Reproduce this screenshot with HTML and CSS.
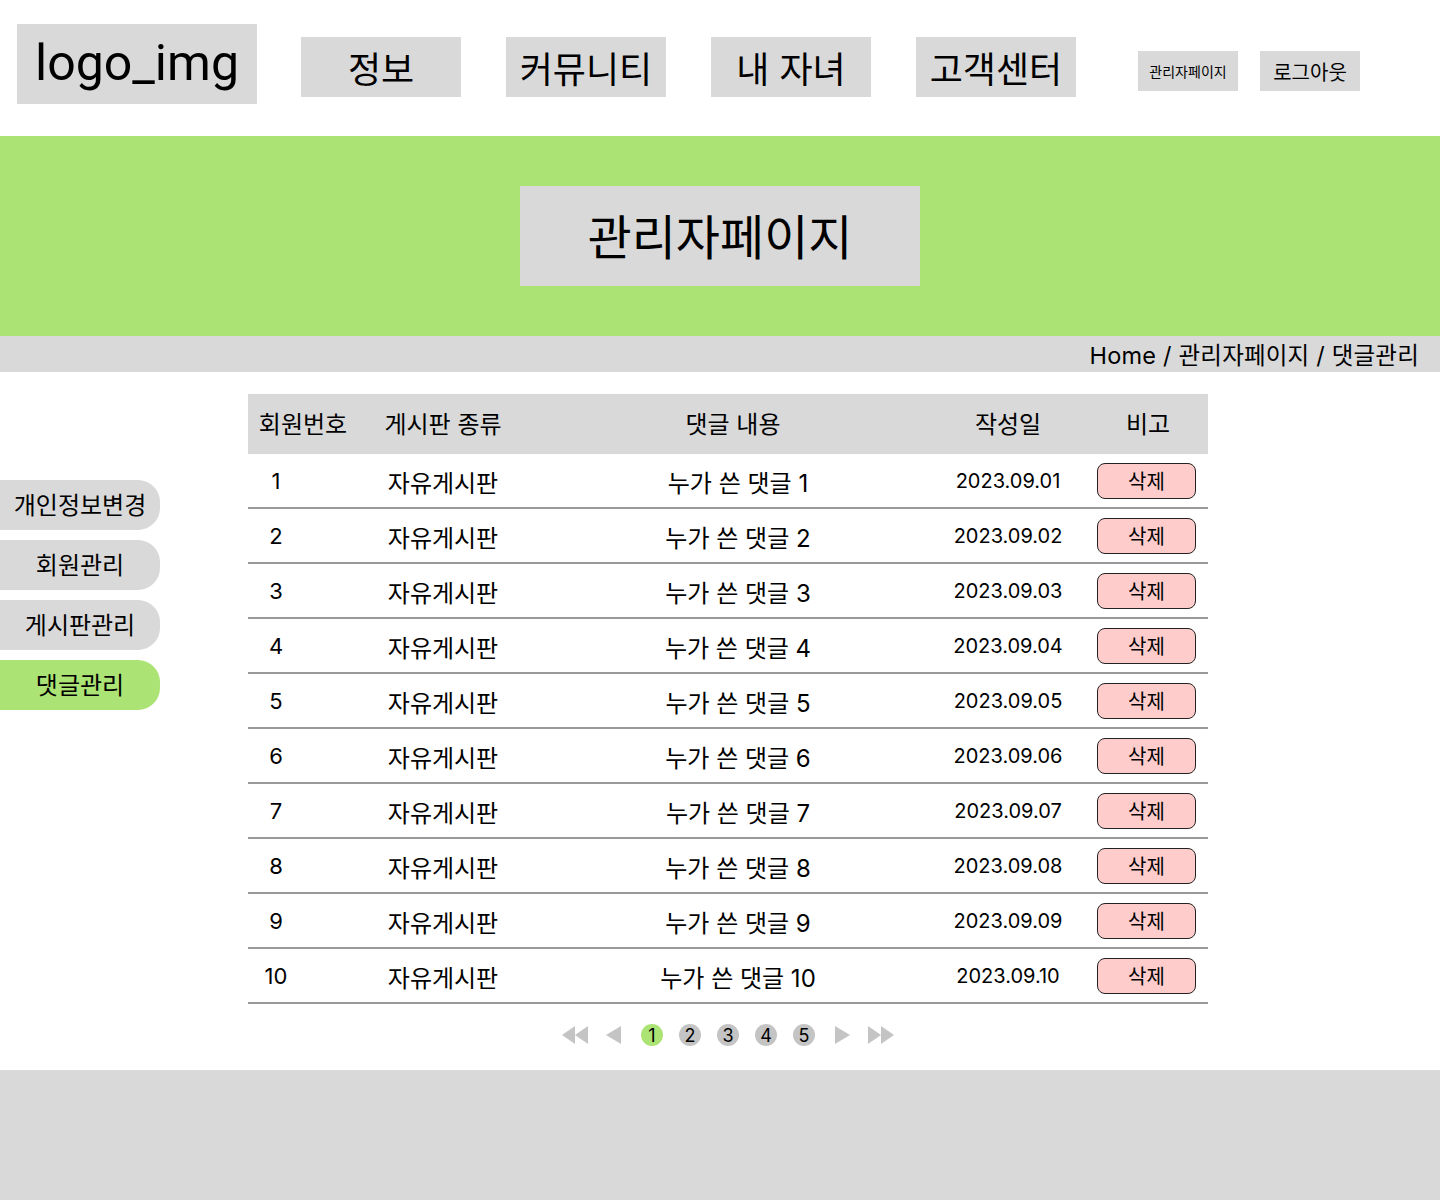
FILE: index.html
```html
<!DOCTYPE html>
<html lang="ko">
<head>
<meta charset="utf-8">
<title>관리자페이지 - 댓글관리</title>
<link rel="stylesheet" href="styles.css">
</head>
<body>
<header class="top">
  <div class="logo">logo_img</div>
  <nav class="gnb">
    <a class="gnb-item gnb-first">정보</a>
    <a class="gnb-item">커뮤니티</a>
    <a class="gnb-item">내 자녀</a>
    <a class="gnb-item">고객센터</a>
  </nav>
  <div class="util">
    <a class="util-admin">관리자페이지</a>
    <a class="util-logout">로그아웃</a>
  </div>
</header>

<section class="banner">
  <h1 class="banner-title">관리자페이지</h1>
</section>

<div class="crumb">Home / 관리자페이지 / 댓글관리</div>

<main class="content">
  <aside class="side">
    <a class="side-item">개인정보변경</a>
    <a class="side-item">회원관리</a>
    <a class="side-item">게시판관리</a>
    <a class="side-item side-active">댓글관리</a>
  </aside>

  <section class="board">
    <div class="thead">
      <div class="th">회원번호</div>
      <div class="th">게시판 종류</div>
      <div class="th">댓글 내용</div>
      <div class="th">작성일</div>
      <div class="th th-last">비고</div>
    </div>
    <div class="tbody">
      <div class="tr"><div class="td td-no">1</div><div class="td">자유게시판</div><div class="td td-text">누가 쓴 댓글 1</div><div class="td td-date">2023.09.01</div><div class="td td-act"><button class="del">삭제</button></div></div>
      <div class="tr"><div class="td td-no">2</div><div class="td">자유게시판</div><div class="td td-text">누가 쓴 댓글 2</div><div class="td td-date">2023.09.02</div><div class="td td-act"><button class="del">삭제</button></div></div>
      <div class="tr"><div class="td td-no">3</div><div class="td">자유게시판</div><div class="td td-text">누가 쓴 댓글 3</div><div class="td td-date">2023.09.03</div><div class="td td-act"><button class="del">삭제</button></div></div>
      <div class="tr"><div class="td td-no">4</div><div class="td">자유게시판</div><div class="td td-text">누가 쓴 댓글 4</div><div class="td td-date">2023.09.04</div><div class="td td-act"><button class="del">삭제</button></div></div>
      <div class="tr"><div class="td td-no">5</div><div class="td">자유게시판</div><div class="td td-text">누가 쓴 댓글 5</div><div class="td td-date">2023.09.05</div><div class="td td-act"><button class="del">삭제</button></div></div>
      <div class="tr"><div class="td td-no">6</div><div class="td">자유게시판</div><div class="td td-text">누가 쓴 댓글 6</div><div class="td td-date">2023.09.06</div><div class="td td-act"><button class="del">삭제</button></div></div>
      <div class="tr"><div class="td td-no">7</div><div class="td">자유게시판</div><div class="td td-text">누가 쓴 댓글 7</div><div class="td td-date">2023.09.07</div><div class="td td-act"><button class="del">삭제</button></div></div>
      <div class="tr"><div class="td td-no">8</div><div class="td">자유게시판</div><div class="td td-text">누가 쓴 댓글 8</div><div class="td td-date">2023.09.08</div><div class="td td-act"><button class="del">삭제</button></div></div>
      <div class="tr"><div class="td td-no">9</div><div class="td">자유게시판</div><div class="td td-text">누가 쓴 댓글 9</div><div class="td td-date">2023.09.09</div><div class="td td-act"><button class="del">삭제</button></div></div>
      <div class="tr"><div class="td td-no">10</div><div class="td">자유게시판</div><div class="td td-text">누가 쓴 댓글 10</div><div class="td td-date">2023.09.10</div><div class="td td-act"><button class="del">삭제</button></div></div>
    </div>

    <div class="pager">
      <svg class="arr arr-dbl" width="26" height="18" viewBox="0 0 26 18"><polygon points="13,0 13,18 0,9" /><polygon points="26,0 26,18 13,9" /></svg>
      <svg class="arr arr-one" width="15" height="18" viewBox="0 0 15 18"><polygon points="15,0 15,18 0,9" /></svg>
      <span class="page page-on">1</span>
      <span class="page">2</span>
      <span class="page">3</span>
      <span class="page">4</span>
      <span class="page">5</span>
      <svg class="arr arr-one-r" width="15" height="18" viewBox="0 0 15 18"><polygon points="0,0 0,18 15,9" /></svg>
      <svg class="arr arr-dbl-r" width="26" height="18" viewBox="0 0 26 18"><polygon points="0,0 0,18 13,9" /><polygon points="13,0 13,18 26,9" /></svg>
    </div>
  </section>
</main>

<footer class="foot"></footer>
</body>
</html>
```

FILE: styles.css
```css
* { box-sizing: border-box; }

body {
  margin: 0;
  width: 1440px;
  font-family: Inter, "Noto Sans CJK KR", sans-serif;
  color: #000;
  background: #fff;
}

a { color: inherit; text-decoration: none; }

/* header */
.top {
  height: 136px;
  display: flex;
  align-items: flex-start;
}

.logo {
  margin: 24px 0 0 17px;
  width: 240px;
  height: 80px;
  background: #d9d9d9;
  display: flex;
  align-items: center;
  justify-content: center;
  font-family: Roboto, "Noto Sans CJK KR", sans-serif;
  font-size: 50px;
  padding-bottom: 2px;
}

.gnb {
  display: flex;
  gap: 45px;
  margin: 37px 0 0 44px;
}

.gnb-item {
  width: 160px;
  height: 60px;
  background: #d9d9d9;
  display: flex;
  align-items: center;
  justify-content: center;
  font-family: "Noto Sans CJK KR", sans-serif;
  font-size: 36px;
}

.util {
  display: flex;
  gap: 22px;
  margin: 51px 0 0 62px;
}

.util-admin, .util-logout {
  width: 100px;
  height: 40px;
  background: #d9d9d9;
  display: flex;
  align-items: center;
  justify-content: center;
  font-family: "Noto Sans CJK KR", sans-serif;
}

.util-admin { font-size: 14px; }
.util-logout { font-size: 20px; }

/* banner */
.banner {
  height: 200px;
  background: #abe375;
  display: flex;
  align-items: center;
  justify-content: center;
}

.banner-title {
  margin: 0;
  width: 400px;
  height: 100px;
  background: #d9d9d9;
  display: flex;
  align-items: center;
  justify-content: center;
  font-family: "Noto Sans CJK KR", sans-serif;
  font-weight: 400;
  font-size: 48px;
  padding-bottom: 4px;
}

.crumb {
  height: 36px;
  background: #d9d9d9;
  display: flex;
  align-items: center;
  justify-content: flex-end;
  padding: 0 21px 0 0;
  font-size: 23.5px;
  letter-spacing: 0.2px;
}

/* content */
.content {
  display: flex;
  align-items: flex-start;
  height: 698px;
}

.side {
  width: 160px;
  margin-top: 108px;
  display: flex;
  flex-direction: column;
  gap: 10px;
}

.side-item {
  height: 50px;
  background: #d9d9d9;
  border-radius: 0 22px 22px 0;
  display: flex;
  align-items: center;
  justify-content: center;
  font-family: "Noto Sans CJK KR", sans-serif;
  font-size: 24px;
  padding-bottom: 3px;
}

.side-active { background: #abe375; }

.board {
  width: 960px;
  margin: 22px 0 0 88px;
}

.thead, .tr {
  display: grid;
  grid-template-columns: 110px 170px 410px 140px 130px;
}

.thead {
  height: 60px;
  background: #d9d9d9;
  align-items: center;
  font-size: 24px;
}

.th { text-align: center; padding-bottom: 3px; }
.th-last { padding-left: 10px; }

.tr {
  height: 55px;
  border-bottom: 2px solid #999;
  align-items: center;
  font-size: 24px;
}

.td { text-align: center; padding-top: 1px; }
.td-no { padding-right: 54px; font-size: 22px; }
.td-text { padding-left: 10px; }
.td-date { font-size: 20px; }
.td-act { display: flex; padding-left: 19px; padding-top: 1px; }

.del {
  width: 99px;
  height: 36px;
  background: #ffcccc;
  border: 1px solid #222;
  border-radius: 8px;
  font-family: "Noto Sans CJK KR", sans-serif;
  font-size: 20px;
  color: #000;
  padding: 0 0 2px;
}

/* pager */
.pager {
  height: 62px;
  display: flex;
  align-items: center;
  justify-content: center;
}

.arr { fill: #c4c4c4; }
.arr-one { margin: 0 20px 0 18px; }
.arr-one-r { margin: 0 18px 0 20px; }

.page {
  width: 22px;
  height: 22px;
  border-radius: 50%;
  background: #c4c4c4;
  display: flex;
  align-items: center;
  justify-content: center;
  font-size: 18px;
  margin-right: 16px;
}

.page:nth-of-type(5) { margin-right: 0; }
.page-on { background: #abe375; }

.foot {
  height: 130px;
  background: #d9d9d9;
}
```
